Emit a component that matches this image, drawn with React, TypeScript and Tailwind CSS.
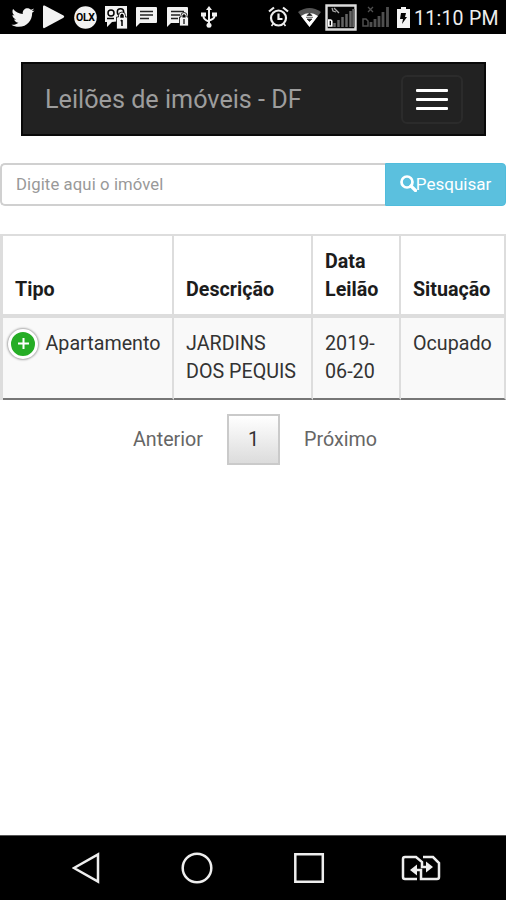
import React, { useState } from 'react';
import { FaTwitter } from 'react-icons/fa';

const properties = [
  { type: 'Apartamento', description: 'JARDINS DOS PEQUIS', date: '2019-06-20', status: 'Ocupado' },
];

const StatusBar = () => (
  <div className="h-[34px] shrink-0 bg-black text-white flex items-center justify-between pl-[11px] pr-2">
    <div className="flex items-center text-[#f2f2f2]">
      <FaTwitter className="w-6 h-[23px]" />
      <svg className="ml-2 w-[22px] h-6" viewBox="0 0 22 24" fill="currentColor"><path d="M0 1.5Q0 0 1.5.5L20.500 10.500Q22 11.500 20.500 12.800L1.500 23Q0 23.500 0 22Z" /></svg>
      <svg className="ml-[9px] w-[23px] h-[23px]" viewBox="0 0 23 23">
        <circle cx="11.500" cy="11.500" r="11.300" fill="currentColor" />
        <text x="11.500" y="15" textAnchor="middle" fontFamily="Roboto, sans-serif" fontWeight="700" fontSize="10.500" textLength="19" fill="#000">OLX</text>
      </svg>
      <svg className="ml-[7px] w-6 h-6" viewBox="0 0 24 24">
        <path d="M1 1h22v15h-6l-9 1-5 5v-5H1z" fill="currentColor" />
        <g fill="none" stroke="#000" strokeWidth="1.500">
          <circle cx="7" cy="8" r="3" />
          <path d="M3 13.500h7" />
          <circle cx="16.500" cy="7" r="3.200" />
        </g>
        <path d="M12.500 12h2v-1.500a3.500 3.500 0 0 1 7 0V12h2v12h-11z" fill="currentColor" stroke="#000" strokeWidth=".8" />
        <path d="M17 12v-1.500q1-2 2 0V12zM18 15v6M16.800 16.200 18 15" stroke="#000" strokeWidth="1.500" fill="#000" />
      </svg>
      <svg className="ml-2 w-[21px] h-5" viewBox="0 0 21 20">
        <path d="M1 0h19q1 0 1 1v14q0 1-1 1H4l-4 4V1q0-1 1-1z" fill="currentColor" />
        <path d="M4 4.500h13M4 8h13M4 11.500h9" stroke="#222" strokeWidth="1.400" />
      </svg>
      <svg className="ml-[10px] w-[22px] h-5" viewBox="0 0 22 20">
        <path d="M1 0h19q1 0 1 1v14q0 1-1 1H4l-4 4V1q0-1 1-1z" fill="currentColor" />
        <path d="M4 4.500h13M4 8h9M4 11.500h7" stroke="#222" strokeWidth="1.400" />
        <path d="M12.500 10h1.500V8.500a3 3 0 0 1 6 0V10h1.500v9h-9z" fill="currentColor" stroke="#000" strokeWidth=".8" />
        <path d="M16 10V8.500q1-1.500 2 0V10zM17 12v5" stroke="#000" strokeWidth="1.200" fill="#000" />
      </svg>
      <svg className="ml-3 w-4 h-[22px]" viewBox="0 0 16 22">
        <path d="M8 3v17M2.500 7v3.500q0 3 5.500 5M13.500 7v3q0 3-5.500 4.500" fill="none" stroke="currentColor" strokeWidth="2" />
        <path d="M8 0l3 4H5zM0 6.500h5v4H0zM11 6.500h5v4h-5z" fill="currentColor" />
        <circle cx="8" cy="19.300" r="2.500" fill="currentColor" />
      </svg>
    </div>
    <div className="flex items-center">
      <svg className="w-[21px] h-[22px]" viewBox="0 0 21 22" fill="none" stroke="#eee">
        <circle cx="10.500" cy="12" r="7.500" strokeWidth="2.200" />
        <path d="M1 5.500l5-4M20 5.500l-5-4M10.500 7.500V13h4" strokeWidth="2.200" />
        <path d="M5 18l-1.500 2M16 18l1.500 2" strokeWidth="1.600" />
      </svg>
      <svg className="ml-[9px] w-[23px] h-[19px]" viewBox="0 0 23 19">
        <path d="M0 4Q11.500-4 23 4L11.500 19z" fill="#555" />
        <path d="M3 8Q11.500 2 20 8L11.500 19z" fill="#fff" />
        <path d="M9 7.500l2.500-2.500 2.500 2.500zM9 11l2.500 2.500 2.500-2.500zM8 9.300h7" fill="#222" stroke="#222" strokeWidth=".7" />
      </svg>
      <svg className="ml-1 w-8 h-[27px]" viewBox="0 0 32 27">
        <path d="M1.500 1.500h29v24h-29z" fill="#060606" stroke="#ddd" strokeWidth="2.400" />
        <path d="M9.500 23v-4M13.500 23v-7M17.500 23v-10M21.500 23v-13M25.500 23v-16M28.500 23V5" stroke="#666" strokeWidth="2.500" />
        <path d="M7 4l1 3 3 1M9 4l5 5" stroke="#aaa" strokeWidth="1.300" fill="none" />
        <path d="M3.800 16h2l1 1v5h-3z" fill="none" stroke="#fff" strokeWidth="1.600" />
      </svg>
      <svg className="ml-[5px] w-[27px] h-[22px]" viewBox="0 0 27 22" stroke="#4f4f4f" fill="none">
        <path d="M9 21v-5M13 21v-8M17 21v-11M21 21v-15M25.500 21V1" strokeWidth="2.800" />
        <path d="M6 1l5 5M11 1L6 6" strokeWidth="1.300" />
        <path d="M1 13h3l2 2v5H1z" strokeWidth="1.500" />
      </svg>
      <svg className="ml-2 w-[13px] h-[21px]" viewBox="0 0 13 21">
        <path d="M4 0h5v2h4v19H0V2h4z" fill="#f4f4f4" />
        <path d="M4 6h5l-1 4h2l-5 7 1-5H3z" fill="#000" />
      </svg>
      <span className="ml-1 mt-[3px] w-[84px] text-[19.500px] leading-none tracking-[0.25px] whitespace-nowrap text-[#eee]">11:10 PM</span>
    </div>
  </div>
);

const Navbar = () => {
  const [open, setOpen] = useState<boolean>(false);

  return (
    <nav className="mt-[28px] ml-[21px] mr-5 h-[74px] bg-[#222] border-2 border-[#090909] flex items-center justify-between pl-[22px] pr-[21px]">
      <span className="mt-px text-[25.200px] text-[#9d9d9d] whitespace-nowrap">Leilões de imóveis - DF</span>
      <button onClick={() => setOpen(!open)} className="w-[62px] h-[49px] border-2 border-[#2b2b2b] rounded-md flex flex-col items-center justify-center gap-[6px]">
        <span className="w-8 h-[3px] rounded-[1px] bg-white" />
        <span className="w-8 h-[3px] rounded-[1px] bg-white" />
        <span className="w-8 h-[3px] rounded-[1px] bg-white" />
      </button>
    </nav>
  );
};

const SearchForm = () => {
  const [query, setQuery] = useState<string>('');

  return (
    <form onSubmit={(e) => e.preventDefault()} className="mt-[27px] h-[43px] flex">
      <input
        value={query}
        onChange={(e) => setQuery(e.target.value)}
        placeholder="Digite aqui o imóvel"
        className="w-[385px] pl-[14px] border-2 border-r-0 border-[#d0d0d0] rounded-l-[5px] text-[16.700px] tracking-[0.1px] placeholder:text-[#999] outline-none"
      />
      <button type="submit" className="flex-1 bg-[#5bc0de] border border-[#50bcdc] rounded-r-[4px] text-white text-[17px] flex items-center justify-center">
        <svg className="w-[17px] h-[17px] -mt-[3px]" viewBox="0 0 17 17" fill="none" stroke="currentColor">
          <circle cx="7" cy="7" r="5.500" strokeWidth="2.700" />
          <path d="M11 11l4.500 4.500" strokeWidth="3.200" strokeLinecap="round" />
        </svg>
        <span className="-ml-px mt-px">Pesquisar</span>
      </button>
    </form>
  );
};

const ResultsTable = () => (
  <table className="mt-7 w-[506px] table-fixed border-separate border-spacing-0 text-left text-[19.700px] leading-7 text-[#333] border-l-[3px] border-t-2 border-[#ddd]">
    <colgroup>
      <col className="w-[171px]" />
      <col className="w-[139px]" />
      <col className="w-[88px]" />
      <col className="w-[105px]" />
    </colgroup>
    <thead>
      <tr className="h-[82px] align-bottom text-[#1c1c1c]">
        {['Tipo', 'Descrição', 'Data Leilão', 'Situação'].map((title) => (
          <th key={title} className="border-r-2 border-b-4 border-[#ddd] pl-3 pr-0 pb-[10px] font-bold">{title}</th>
        ))}
      </tr>
    </thead>
    <tbody>
      {properties.map((p) => (
        <tr key={p.description} className="h-[82px] align-top bg-[#f9f9f9]">
          <td className="border-r-2 border-b-2 border-r-[#ddd] border-b-[#777] pt-3 pl-[5px]">
            <div className="h-7 flex items-center">
              <button className="w-[30px] h-[30px] shrink-0 -mt-px rounded-full border-[3px] border-white bg-[#25ad25] shadow-[0_0_2px_1px_#aaa] flex items-center justify-center">
                <svg className="w-[11px] h-[11px]" viewBox="0 0 11 11" stroke="#fff" strokeWidth="2"><path d="M5.500 0v11M0 5.500h11" /></svg>
              </button>
              <span className="ml-[7.500px]">{p.type}</span>
            </div>
          </td>
          <td className="border-r-2 border-b-2 border-r-[#ddd] border-b-[#777] pt-3 px-3">{p.description}</td>
          <td className="border-r-2 border-b-2 border-r-[#ddd] border-b-[#777] pt-3 pl-3">{p.date}</td>
          <td className="border-r-2 border-b-2 border-r-[#ddd] border-b-[#777] pt-3 pl-3">{p.status}</td>
        </tr>
      ))}
    </tbody>
  </table>
);

const Pagination = () => (
  <div className="mt-[14px] h-[51px] flex items-center pl-[133px] text-[19.700px] text-[#666]">
    <button className="w-[94px] text-left">Anterior</button>
    <button className="w-[53px] h-[51px] border-2 border-[#cacaca] bg-linear-to-b from-white to-[#dcdcdc] text-[#333]">1</button>
    <button className="ml-6">Próximo</button>
  </div>
);

const BottomBar = () => (
  <div className="mt-auto h-[65px] shrink-0 bg-black border-t border-[#555] flex items-center pl-[72px] text-[#eee]">
    <svg className="w-7 h-8" viewBox="0 0 28 32" fill="none" stroke="currentColor" strokeWidth="2.500"><path d="M26 2.500v27L2 16z" /></svg>
    <svg className="ml-[81px] w-8 h-8" viewBox="0 0 32 32" fill="none" stroke="currentColor" strokeWidth="2.500"><circle cx="16" cy="16" r="14.300" /></svg>
    <svg className="ml-[80px] w-8 h-8" viewBox="0 0 32 32" fill="none" stroke="currentColor" strokeWidth="2.500"><path d="M2.300 2.300h27.500v27.500H2.300z" /></svg>
    <svg className="ml-[76px] w-10 h-[26px]" viewBox="0 0 40 26" fill="none" stroke="currentColor" strokeWidth="2.500">
      <path d="M16 24H4q-2 0-2-2V4q0-2 2-2h11l6 5v5h7M22 2h10l6 6v14q0 2-2 2H20v-9h-7" />
      <path d="M25 6.500l7 5.500-7 5.500zM16 9.500L9 15l7 5.500z" fill="currentColor" stroke="none" />
    </svg>
  </div>
);

const App: React.FC = () => {
  return (
    <div className="w-[506px] h-[900px] flex flex-col bg-white overflow-hidden font-[Roboto,sans-serif]">
      <StatusBar />
      <Navbar />
      <SearchForm />
      <ResultsTable />
      <Pagination />
      <BottomBar />
    </div>
  );
};

export default App;
